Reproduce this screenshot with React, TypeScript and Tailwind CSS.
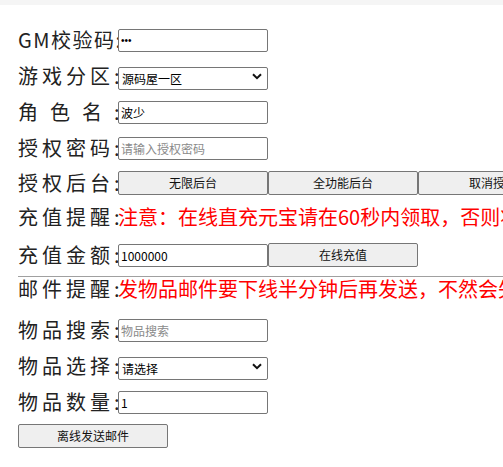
import type { ReactNode } from "react";

const font = { fontFamily: '"Noto Sans CJK SC", "Noto Sans", sans-serif' };

function Label({ text, track }: { text: string; track: string }) {
  return (
    <span className="w-[100px] shrink-0 whitespace-nowrap text-[20px] leading-none text-[#222]">
      <span className={track}>{text}</span>
      <span>:</span>
    </span>
  );
}

function Row({ h, children }: { h: string; children: ReactNode }) {
  return <div className={`flex items-center whitespace-nowrap ${h}`}>{children}</div>;
}

function TextBox({ value, placeholder, type = "text" }: { value?: string; placeholder?: string; type?: string }) {
  return (
    <input
      type={type}
      defaultValue={value}
      placeholder={placeholder}
      style={type === "password" ? { fontFamily: '"Liberation Sans", sans-serif', fontSize: "10px" } : undefined}
      className="h-[23px] w-[150px] shrink-0 rounded-[2px] border border-[#767676] bg-white px-[2px] text-[12px] text-black placeholder:text-[#8a8a8a] outline-none"
    />
  );
}

function Select({ value }: { value: string }) {
  return (
    <div className="relative h-[23px] w-[150px] shrink-0">
      <select className="h-full w-full appearance-none rounded-[2px] border border-[#767676] bg-white pl-[3px] text-[12px] text-black outline-none">
        <option>{value}</option>
      </select>
      <svg className="pointer-events-none absolute right-[6px] top-[8px]" width="10" height="7" viewBox="0 0 10 7">
        <path d="M1 1.2 L5 5.2 L9 1.2" fill="none" stroke="#111" strokeWidth="2" />
      </svg>
    </div>
  );
}

function Btn({ children, w = "w-[150px]" }: { children: ReactNode; w?: string }) {
  return (
    <button className={`h-[24px] ${w} shrink-0 rounded-[2px] border border-[#767676] bg-[#efefef] text-[12px] text-[#111]`}>
      {children}
    </button>
  );
}

export default function App() {
  return (
    <div className="h-[467px] w-full overflow-hidden bg-white" style={font}>
      <div className="h-[5px] bg-[#f5f5f5]" />
      <div className="pl-[18px] pt-[17px]">
        <Row h="h-[36px]">
          <Label text="GM校验码" track="tracking-[1.5px]" />
          <TextBox type="password" value="123" />
        </Row>
        <Row h="h-[36px]">
          <Label text="游戏分区" track="tracking-[4px]" />
          <Select value="源码屋一区" />
        </Row>
        <Row h="h-[36px]">
          <Label text="角色名" track="tracking-[12px]" />
          <TextBox value="波少" />
        </Row>
        <Row h="h-[36px]">
          <Label text="授权密码" track="tracking-[4px]" />
          <TextBox placeholder="请输入授权密码" />
        </Row>
        <Row h="h-[34px]">
          <Label text="授权后台" track="tracking-[4px]" />
          <Btn>无限后台</Btn>
          <Btn>全功能后台</Btn>
          <Btn>取消授权</Btn>
        </Row>
        <Row h="h-[34px]">
          <Label text="充值提醒" track="tracking-[4px]" />
          <span className="text-[20px] leading-none text-[#ff0000]">
            注意：在线直充元宝请在60秒内领取，否则将会失效！
          </span>
        </Row>
        <Row h="h-[42px]">
          <Label text="充值金额" track="tracking-[4px]" />
          <TextBox value="1000000" />
          <Btn>在线充值</Btn>
        </Row>
        <div className="h-px bg-[#a0a0a0]" />
        <Row h="h-[23px]">
          <Label text="邮件提醒" track="tracking-[4px]" />
          <span className="text-[20px] leading-none text-[#ff0000]">
            发物品邮件要下线半分钟后再发送，不然会失败！
          </span>
        </Row>
        <div className="mt-[12px]">
          <Row h="h-[36px]">
            <Label text="物品搜索" track="tracking-[4px]" />
            <TextBox placeholder="物品搜索" />
          </Row>
          <Row h="h-[36px]">
            <Label text="物品选择" track="tracking-[4px]" />
            <Select value="请选择" />
          </Row>
          <Row h="h-[36px]">
            <Label text="物品数量" track="tracking-[4px]" />
            <TextBox value="1" />
          </Row>
        </div>
        <div className="mt-[2px]">
          <Btn>离线发送邮件</Btn>
        </div>
      </div>
    </div>
  );
}
